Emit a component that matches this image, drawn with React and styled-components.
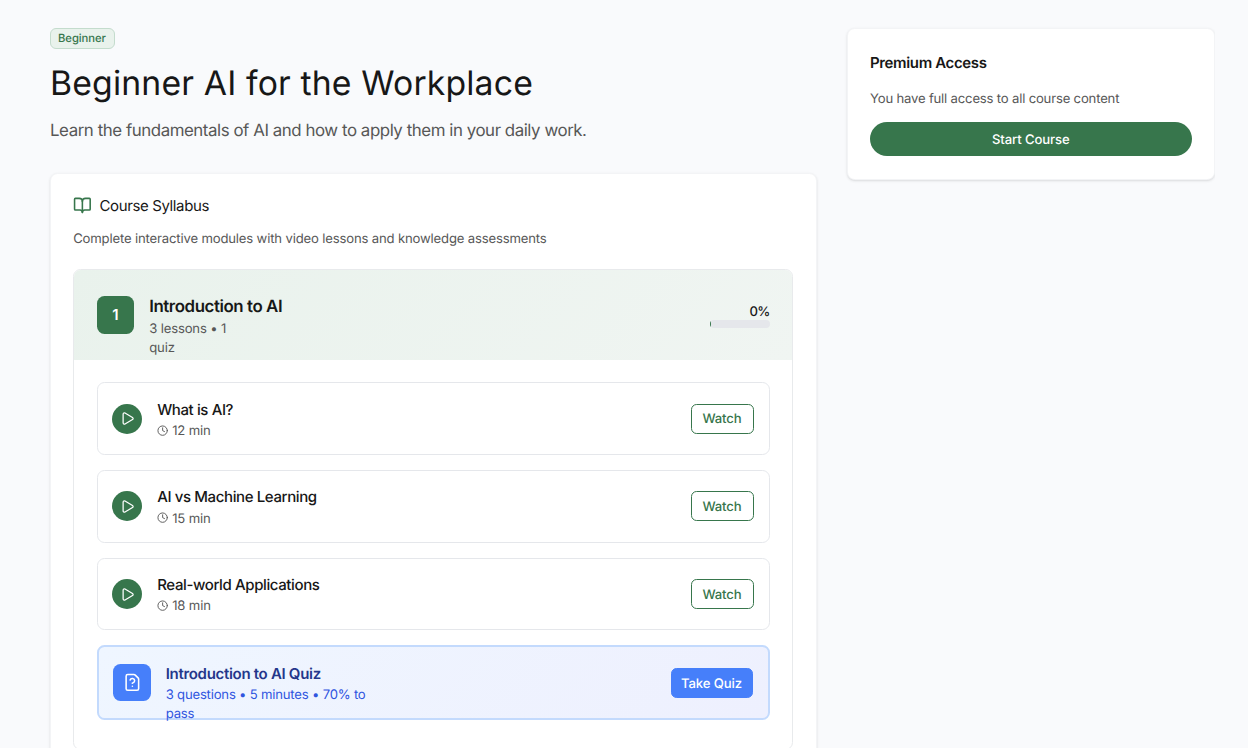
import React from "react";
import styled, { createGlobalStyle } from "styled-components";
import { BookOpen, Clock, FileQuestionMark, Play } from "lucide-react";

const GlobalStyle = createGlobalStyle`
  *, *::before, *::after { box-sizing: border-box; }
  body {
    margin: 0;
    background: #f9fafc;
    color: #171717;
    font-family: Inter, "Liberation Sans", sans-serif;
    font-size: 15px;
    line-height: 22.5px;
    overflow: hidden;
    text-rendering: geometricPrecision;
  }
  h1, h2, h3, h4, p { margin: 0; font-weight: 400; }
  button { font-family: inherit; margin: 0; cursor: pointer; text-rendering: inherit; }
`;

const Page = styled.main`
  display: grid;
  grid-template-columns: 766.5px 368.5px;
  column-gap: 30px;
  align-items: start;
  width: 1215px;
  height: 748px;
  padding: 28px 0 0 50px;
  overflow: hidden;
`;

const Badge = styled.span`
  display: flex;
  align-items: center;
  width: 65px;
  height: 21px;
  padding: 0 7px;
  border: 1px solid #c4dccd;
  border-radius: 6px;
  background: #e9f2ec;
  color: #37764c;
  font-size: 11.25px;
  font-weight: 500;
  letter-spacing: -0.05px;
  white-space: nowrap;
`;

const Title = styled.h1`
  margin-top: 16px;
  font-size: 33.75px;
  line-height: 37.5px;
  font-weight: 400;
  letter-spacing: 0.15px;
`;

const Lead = styled.p`
  margin-top: 15.5px;
  font-size: 16.875px;
  line-height: 27px;
  font-weight: 400;
  letter-spacing: -0.445px;
  color: #575757;
`;

const Card = styled.section`
  border: 1px solid #f3f4f6;
  border-radius: 7.5px;
  background: #fff;
  padding: 22.5px;
  box-shadow: 0 1px 3px rgba(0, 0, 0, 0.1), 0 1px 2px -1px rgba(0, 0, 0, 0.1);
`;

const Syllabus = styled(Card)`
  margin-top: 28px;
  height: 620px;
  padding-left: 22.2px;
`;

const SyllabusTitle = styled.h2`
  display: flex;
  align-items: center;
  gap: 7.5px;
  height: 18.75px;
  font-size: 15px;
  letter-spacing: -0.37px;
  svg { color: #37764c; margin-top: -1px; }
`;

const Muted = styled.p`
  font-size: 13.125px;
  line-height: 18.75px;
  font-weight: 400;
  letter-spacing: -0.165px;
  color: #575757;
`;

const SyllabusNote = styled(Muted)`
  margin-top: 14.5px;
`;

const Module = styled.article`
  margin-top: 20.5px;
  height: 481px;
  border: 1px solid #e8eaec;
  border-radius: 7.5px;
  overflow: hidden;
`;

const ModuleHeader = styled.header`
  display: flex;
  justify-content: space-between;
  height: 90px;
  padding: 26px 22.5px 0;
  background: linear-gradient(135deg, #e9f2ec, #f0f5f2);
`;

const Group = styled.div`
  display: flex;
  gap: 15px;
`;

const Tile = styled.div`
  display: flex;
  flex: none;
  align-items: center;
  justify-content: center;
  width: 37.5px;
  height: 37.5px;
  border-radius: 7.5px;
  background: ${({ $color }) => $color};
  color: #fff;
  font-size: 15px;
  font-weight: 600;
`;

const ModuleTitle = styled.h3`
  font-size: 16.875px;
  line-height: 22px;
  font-weight: 600;
  letter-spacing: -0.025em;
`;

const ModuleMeta = styled(Muted)`
  width: 86px;
  margin-top: 2px;
`;

const Progress = styled.div`
  width: 60px;
  padding-top: 7px;
  font-size: 13.125px;
  line-height: 18px;
  font-weight: 500;
  letter-spacing: -0.8px;
  text-align: right;
`;

const Track = styled.div`
  height: 7.5px;
  margin-top: -1px;
  border-radius: 4px;
  background: #e5e7eb;
  overflow: hidden;
  &::before {
    content: "";
    display: block;
    width: 1px;
    height: 100%;
    background: #37764c;
  }
`;

const Items = styled.div`
  display: flex;
  flex-direction: column;
  gap: 15px;
  padding: 22.3px 22.5px;
`;

const Item = styled.div`
  display: flex;
  align-items: center;
  justify-content: space-between;
  height: 72.7px;
  padding: 0 15px 0 14.5px;
  border: 1px solid #e5e7eb;
  border-radius: 7.5px;
`;

const PlayDisc = styled.div`
  display: flex;
  flex: none;
  align-items: center;
  justify-content: center;
  align-self: center;
  width: 30px;
  height: 30px;
  border-radius: 50%;
  background: #37764c;
  color: #fff;
`;

const LessonText = styled.div`
  padding-top: 2px;
`;

const ItemTitle = styled.h4`
  font-size: 15px;
  line-height: 22.5px;
  font-weight: 500;
  letter-spacing: -0.385px;
`;

const Duration = styled(Muted)`
  display: flex;
  align-items: center;
  gap: 3.75px;
  margin-top: 1px;
  svg { margin-top: -2px; }
`;

const Button = styled.button`
  display: flex;
  align-items: center;
  justify-content: center;
  width: ${({ $width }) => $width};
  height: 30px;
  padding: 1.5px 0 0;
  border: 1px solid #37764c;
  border-radius: 5.6px;
  background: #fff;
  color: #37764c;
  font-size: 13.125px;
  font-weight: 500;
  letter-spacing: -0.1px;
`;

const QuizButton = styled(Button)`
  margin-top: 4px;
  border-color: #467ffa;
  background: #467ffa;
  color: #fff;
`;

const Quiz = styled(Item)`
  align-items: flex-start;
  height: 74.5px;
  padding: 16.5px 15px 0 14.5px;
  border: 2px solid #c3dafd;
  background: linear-gradient(135deg, #eff6ff, #eef0fe);
`;

const QuizTitle = styled(ItemTitle)`
  line-height: 20px;
  font-weight: 600;
  letter-spacing: -0.3px;
  color: #24378b;
`;

const QuizMeta = styled(Muted)`
  margin-top: 2px;
  width: 222px;
  letter-spacing: -0.2px;
  color: #2f55df;
`;

const Access = styled(Card)`
  height: 152px;
`;

const AccessTitle = styled.h3`
  font-size: 15px;
  line-height: 22.5px;
  font-weight: 600;
  letter-spacing: -0.36px;
`;

const AccessNote = styled(Muted)`
  margin-top: 16px;
  letter-spacing: -0.185px;
`;

const StartButton = styled(Button)`
  width: 100%;
  height: 33.75px;
  margin-top: 13.5px;
  border: 0;
  border-radius: 17px;
  background: #37764c;
  color: #fff;
`;

const lessons = [
  { title: "What is AI?", minutes: 12 },
  { title: "AI vs Machine Learning", minutes: 15 },
  { title: "Real-world Applications", minutes: 18 },
];

function Lesson({ title, minutes }) {
  return (
    <Item>
      <Group>
        <PlayDisc><Play size={15} strokeWidth={2} /></PlayDisc>
        <LessonText>
          <ItemTitle>{title}</ItemTitle>
          <Duration><Clock size={11.25} />{minutes} min</Duration>
        </LessonText>
      </Group>
      <Button $width="63px">Watch</Button>
    </Item>
  );
}

export default function App() {
  return (
    <>
      <GlobalStyle />
      <Page>
        <div>
          <Badge>Beginner</Badge>
          <Title>Beginner AI for the Workplace</Title>
          <Lead>Learn the fundamentals of AI and how to apply them in your daily work.</Lead>
          <Syllabus>
            <SyllabusTitle><BookOpen size={18.75} />Course Syllabus</SyllabusTitle>
            <SyllabusNote>Complete interactive modules with video lessons and knowledge assessments</SyllabusNote>
            <Module>
              <ModuleHeader>
                <Group>
                  <Tile $color="#37764c">1</Tile>
                  <div>
                    <ModuleTitle>Introduction to AI</ModuleTitle>
                    <ModuleMeta>3 lessons • 1 quiz</ModuleMeta>
                  </div>
                </Group>
                <Progress>0%<Track /></Progress>
              </ModuleHeader>
              <Items>
                {lessons.map((lesson) => <Lesson key={lesson.title} {...lesson} />)}
                <Quiz>
                  <Group>
                    <Tile $color="#467ffa"><FileQuestionMark size={18.75} /></Tile>
                    <div>
                      <QuizTitle>Introduction to AI Quiz</QuizTitle>
                      <QuizMeta>3 questions • 5 minutes • 70% to pass</QuizMeta>
                    </div>
                  </Group>
                  <QuizButton $width="82px">Take Quiz</QuizButton>
                </Quiz>
              </Items>
            </Module>
          </Syllabus>
        </div>
        <Access as="aside">
          <AccessTitle>Premium Access</AccessTitle>
          <AccessNote>You have full access to all course content</AccessNote>
          <StartButton>Start Course</StartButton>
        </Access>
      </Page>
    </>
  );
}
